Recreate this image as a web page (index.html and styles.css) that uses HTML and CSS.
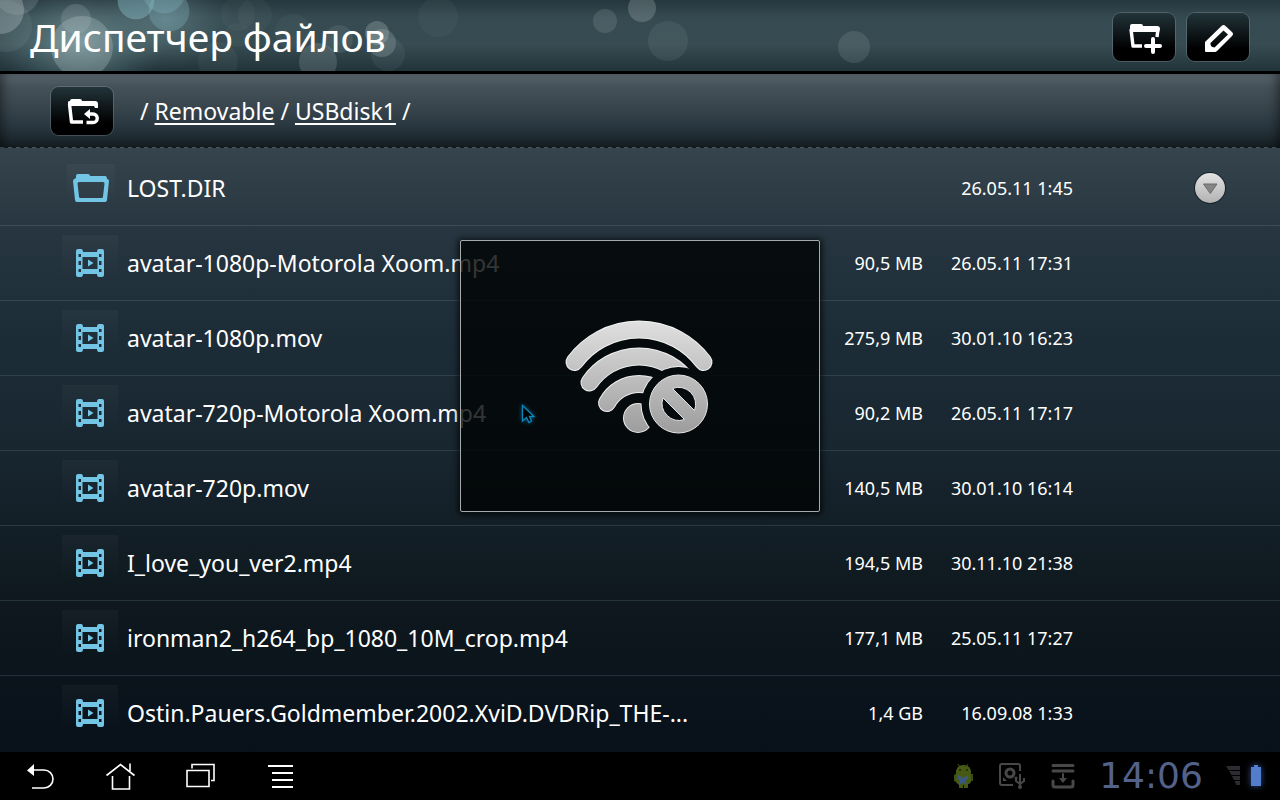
FILE: index.html
```html
<!DOCTYPE html>
<html lang="ru">
<head>
  <meta charset="UTF-8">
  <title>Диспетчер файлов</title>
  <link rel="stylesheet" href="styles.css">
</head>
<body>
  <header class="titlebar">
    <svg class="bokeh" width="900" height="71" viewBox="0 0 900 71" aria-hidden="true">
      <defs>
        <radialGradient id="glow"><stop offset="0" stop-color="#8fb4b8" stop-opacity=".6"/><stop offset="1" stop-color="#6e9498" stop-opacity="0"/></radialGradient>
      </defs>
      <ellipse cx="80" cy="42" rx="85" ry="58" fill="url(#glow)"/>
      <ellipse cx="165" cy="20" rx="70" ry="50" fill="url(#glow)" opacity=".6"/>
      <g fill="#b4c4c6">
        <circle cx="0" cy="10" r="24" opacity=".35"/>
        <circle cx="17" cy="-8" r="23" opacity=".2"/>
        <circle cx="6" cy="26" r="26" opacity=".1"/>
        <circle cx="82" cy="47" r="31" opacity=".3"/>
        <circle cx="76" cy="19" r="15" opacity=".2"/>
        <circle cx="238" cy="14" r="17" opacity=".05"/>
        <circle cx="237" cy="35" r="12" opacity=".05"/>
        <circle cx="255" cy="15" r="17" opacity=".05"/>
        <circle cx="218" cy="62" r="20" opacity=".06"/>
        <circle cx="293" cy="32" r="18" opacity=".05"/>
        <circle cx="318" cy="62" r="19" opacity=".2"/>
        <circle cx="339" cy="39" r="14" opacity=".12"/>
        <circle cx="377" cy="33" r="12" opacity=".28"/>
        <circle cx="382" cy="43" r="14" opacity=".24"/>
        <circle cx="388" cy="54" r="17" opacity=".08"/>
        <circle cx="438" cy="17" r="20" opacity=".05"/>
        <circle cx="605" cy="21" r="12" opacity=".16"/>
        <circle cx="642" cy="8" r="14" opacity=".26"/>
        <circle cx="668" cy="41" r="20" opacity=".1"/>
        <circle cx="854" cy="47" r="16" opacity=".15"/>
      </g>
      <g fill="#86b9c4" stroke="#b5d6dc" stroke-opacity=".4">
        <circle cx="136" cy="1" r="18" opacity=".45"/>
        <circle cx="164" cy="-8" r="21" opacity=".3"/>
        <circle cx="169" cy="11" r="20" opacity=".3"/>
      </g>
    </svg>
    <h1 class="title">Диспетчер файлов</h1>
    <button class="tool" type="button" aria-label="Новая папка">
      <svg width="62" height="48" viewBox="0 0 62 48">
        <path d="M17 16V13q0-2 2-2h9q2 0 2 2h14q3 0 3 3l-1 3H17z" fill="#fff"/>
        <path d="M18 16L20 33H29M45 16L44 24" fill="none" stroke="#fff" stroke-width="3.4" stroke-linejoin="round"/>
        <path d="M40 26V39M33 33H47" stroke="#fff" stroke-width="4" stroke-linecap="round"/>
      </svg>
    </button>
    <button class="tool" type="button" aria-label="Правка">
      <svg width="62" height="48" viewBox="0 0 62 48">
        <path fill-rule="evenodd" d="M18 29L34.500 13q2-2 4 0l6.500 6q2 2 0 4L30 38q-1 1-2 1H19q-1 0-1-1zM36.500 17.500L23.500 30Q23 34 27.500 34.500L41 21.500Z" fill="#fff"/>
      </svg>
    </button>
  </header>

  <nav class="pathbar" aria-label="Путь">
    <button class="tool" type="button" aria-label="Вверх">
      <svg width="62" height="48" viewBox="0 0 62 48">
        <path d="M17 18V15q0-1 2-1 0-2 2-2h8q2 0 2 2h13q3 0 3 3v4h-3l-1-2H18z" fill="#fff"/>
        <path d="M18.500 17L20.500 35H32" fill="none" stroke="#fff" stroke-width="3.400" stroke-linejoin="round"/>
        <path d="M33 27l6-5v10z" fill="#fff"/>
        <path d="M37 27H42a4 4 0 0 1 0 8.500H35.500" fill="none" stroke="#fff" stroke-width="3.400"/>
      </svg>
    </button>
    <p class="path">/ <a href="#removable">Removable</a> / <a href="#usbdisk1">USBdisk1</a> /</p>
  </nav>

  <main class="files">
    <svg class="sprite" width="0" height="0" aria-hidden="true">
      <symbol id="film" viewBox="0 0 28 28">
        <path fill-rule="evenodd" fill="#72c5e4" d="M2 0h3q2 0 2 3h14q0-3 2-3h3q2 0 2 2v24q0 2-2 2h-3q-2 0-2-3H7q0 3-2 3H2q-2 0-2-2V2q0-2 2-2zM6.500 8v12h15V8zM2.500 5v3H5V5zM2.500 12v4H5v-4zM2.500 20v3H5v-3zM23 5v3h2.500V5zM23 12v4h2.500v-4zM23 20v3h2.500v-3z"/>
        <path d="M12 10.500l5.500 3.500-5.500 3.500z" fill="#72c5e4"/>
      </symbol>
      <symbol id="folder" viewBox="0 0 36 28">
        <path fill-rule="evenodd" fill="#72c5e4" d="M3 4V2q0-2 2-2h10q2 0 2 2h15q2 0 2 3 2 0 2 2l-2 19q0 2-2 2H4q-2 0-2-2L0 7q0-2 3-3zM6 8q-1.500 0-1.500 1.500L6 22.500Q6 24 7.500 24h21q1.500 0 1.500-1.500L31.500 9.500Q31.500 8 30 8z"/>
      </symbol>
    </svg>
    <table class="list" aria-label="Файлы">
      <colgroup>
        <col class="col-icon"><col><col class="col-size"><col class="col-date"><col class="col-menu">
      </colgroup>
      <tbody>
        <tr>
          <td><span class="thumb thumb-dir"><svg width="36" height="28"><use href="#folder"/></svg></span></td>
          <td>LOST.DIR</td><td class="meta"></td><td class="meta">26.05.11 1:45</td>
          <td class="menu">
            <button class="more" type="button" aria-label="Меню">
              <svg width="32" height="32" viewBox="0 0 32 32">
                <defs><linearGradient id="knob" x2="0" y2="1"><stop offset="0" stop-color="#e2e2e2"/><stop offset="1" stop-color="#b2b2b2"/></linearGradient></defs>
                <circle cx="16" cy="16" r="16" fill="#17222a"/>
                <circle cx="16" cy="16" r="15" fill="url(#knob)"/>
                <path d="M9.500 12h13.500l-6.700 9.500z" fill="#858585" stroke="#6b6b6b" stroke-linejoin="round"/>
              </svg>
            </button>
          </td>
        </tr>
        <tr>
          <td><span class="thumb"><svg width="28" height="28"><use href="#film"/></svg></span></td>
          <td>avatar-1080p-Motorola Xoom.mp4</td><td class="meta">90,5 MB</td><td class="meta">26.05.11 17:31</td><td></td>
        </tr>
        <tr>
          <td><span class="thumb"><svg width="28" height="28"><use href="#film"/></svg></span></td>
          <td>avatar-1080p.mov</td><td class="meta">275,9 MB</td><td class="meta">30.01.10 16:23</td><td></td>
        </tr>
        <tr>
          <td><span class="thumb"><svg width="28" height="28"><use href="#film"/></svg></span></td>
          <td>avatar-720p-Motorola Xoom.mp4</td><td class="meta">90,2 MB</td><td class="meta">26.05.11 17:17</td><td></td>
        </tr>
        <tr>
          <td><span class="thumb"><svg width="28" height="28"><use href="#film"/></svg></span></td>
          <td>avatar-720p.mov</td><td class="meta">140,5 MB</td><td class="meta">30.01.10 16:14</td><td></td>
        </tr>
        <tr>
          <td><span class="thumb"><svg width="28" height="28"><use href="#film"/></svg></span></td>
          <td>I_love_you_ver2.mp4</td><td class="meta">194,5 MB</td><td class="meta">30.11.10 21:38</td><td></td>
        </tr>
        <tr>
          <td><span class="thumb"><svg width="28" height="28"><use href="#film"/></svg></span></td>
          <td>ironman2_h264_bp_1080_10M_crop.mp4</td><td class="meta">177,1 MB</td><td class="meta">25.05.11 17:27</td><td></td>
        </tr>
        <tr>
          <td><span class="thumb"><svg width="28" height="28"><use href="#film"/></svg></span></td>
          <td>Ostin.Pauers.Goldmember.2002.XviD.DVDRip_THE-...</td><td class="meta">1,4 GB</td><td class="meta">16.09.08 1:33</td><td></td>
        </tr>
      </tbody>
    </table>
  </main>

  <footer class="sysbar">
    <button class="nav" type="button" aria-label="Назад">
      <svg width="32" height="32" viewBox="0 0 32 32" fill="none" stroke="#fff" stroke-width="1.600">
        <path d="M3 10.500L10 4v12z" fill="#fff" stroke="none"/>
        <path d="M10 10H20a9 9 0 0 1 0 18H8"/>
      </svg>
    </button>
    <button class="nav" type="button" aria-label="Домой">
      <svg width="32" height="32" viewBox="0 0 32 32" fill="none" stroke="#fff" stroke-width="1.600">
        <path d="M2.500 15.500L16.500 4.500 30.500 15.500M26 3.500V11M8.500 16V29H25.500V16"/>
      </svg>
    </button>
    <button class="nav" type="button" aria-label="Недавние">
      <svg width="32" height="32" viewBox="0 0 32 32" fill="none" stroke="#fff" stroke-width="1.600">
        <path d="M3 10.500H25V26.500H3zM8 8.500V4.500H30V20.500H27"/>
      </svg>
    </button>
    <button class="nav" type="button" aria-label="Меню">
      <svg width="32" height="32" viewBox="0 0 32 32" stroke="#fff" stroke-width="2">
        <path d="M4 6H29M8 13H29M8 20H29M8 27H29"/>
      </svg>
    </button>
    <div class="tray">
      <svg width="20" height="28" viewBox="0 0 20 28" aria-hidden="true">
        <path d="M4 2l2 3M14 2l-2 3" stroke="#465a12"/>
        <path d="M16 12h3v7h-3z" fill="#3c4a14"/>
        <path d="M2 11q0-8 7.500-8T17 11v8q0 3-3 3v4h-4v-3H9v3H5v-4q-3 0-3-3z" fill="#465a14"/>
        <path d="M0 13v6l2 1v-8z" fill="#3e5012"/>
        <circle cx="6" cy="8" r="1" fill="#1c2406"/><circle cx="13" cy="8" r="1" fill="#1c2406"/>
        <path d="M4 13l5 3 5-3v4l-3 2 3 4-5-2-5 2 2-4-2-2z" fill="#3b5882"/>
      </svg>
      <svg width="28" height="28" viewBox="0 0 28 28" fill="none" stroke="#484848" stroke-width="2" aria-hidden="true">
        <path d="M22 9V4q0-2-2-2H4Q2 2 2 4v17q0 2 2 2h11"/>
        <circle cx="12" cy="11" r="4" stroke-width="3"/>
        <path d="M5 19v-4l4 4z" fill="#484848" stroke="none"/>
        <path d="M22 12v13M18 16v3l4 3 4-3v-3"/>
        <circle cx="22" cy="25" r="1"/><circle cx="18" cy="16" r=".6"/>
      </svg>
      <svg width="26" height="28" viewBox="0 0 26 28" fill="none" stroke="#484848" stroke-width="3" stroke-linecap="round" aria-hidden="true">
        <path d="M3 3.500H23M3 9H23M3 19v4q0 2 2 2H21q2 0 2-2V19"/>
        <path d="M13 12v5" stroke-width="2"/><path d="M9 16h8l-4 5z" fill="#484848" stroke="none"/>
      </svg>
      <time class="clock">14:06</time>
      <svg width="14" height="20" viewBox="0 0 14 20" fill="#2c2b31" aria-hidden="true">
        <path d="M0 0h14v4H2.500zM3 5h11v4H5.500zM6 10h8v4H8zM8.500 15H14v4h-3.500z"/>
      </svg>
      <svg class="battery" width="12" height="22" viewBox="0 0 12 22" fill="#537dcb" aria-hidden="true">
        <path d="M4 0h4v2h3v19H1V2h3z"/>
      </svg>
    </div>
  </footer>

  <div class="overlay">
    <div class="toast" role="status" aria-label="Wi-Fi">
      <svg width="180" height="150" viewBox="0 0 180 150">
        <defs>
          <linearGradient id="metal" gradientUnits="userSpaceOnUse" x1="0" y1="20" x2="0" y2="133"><stop offset="0" stop-color="#e0e0e0"/><stop offset="1" stop-color="#9c9c9c"/></linearGradient>
          <mask id="cutEdge" maskUnits="userSpaceOnUse" x="0" y="0" width="180" height="150"><path d="M0 0h180v150H0z" fill="#fff"/><circle cx="128.500" cy="103" r="37" fill="#000"/></mask>
          <mask id="cutBody" maskUnits="userSpaceOnUse" x="0" y="0" width="180" height="150"><path d="M0 0h180v150H0z" fill="#fff"/><circle cx="128.500" cy="103" r="38" fill="#000"/></mask>
          <path id="arc1" d="M24.500 61A80.200 80.200 0 0 1 153.500 61"/>
          <path id="arc2" d="M39.500 81.500A60 60 0 0 1 138.500 81.500"/>
          <path id="arc3" d="M57 102A36.400 36.400 0 0 1 121 102"/>
        </defs>
        <g fill="none" stroke-linecap="round">
          <use href="#arc1" stroke="#f4f4f4" stroke-width="18"/>
          <use href="#arc1" stroke="url(#metal)" stroke-width="16"/>
          <g mask="url(#cutEdge)" stroke="#eee" stroke-width="18">
            <use href="#arc2"/><use href="#arc3"/><circle cx="88" cy="117" r="15" fill="#eee" stroke="none"/>
          </g>
          <g mask="url(#cutBody)" stroke="url(#metal)" stroke-width="16">
            <use href="#arc2"/><use href="#arc3"/><circle cx="88" cy="117" r="14" fill="url(#metal)" stroke="none"/>
          </g>
        </g>
        <path fill="url(#metal)" stroke="#e4e4e4" fill-rule="evenodd" d="M99.500 103a29 29 0 1 1 58 0a29 29 0 1 1-58 0zM122.500 87.500L144.500 109.500A17 17 0 0 0 122.500 87.500zM113 97L134.500 118.500A17 17 0 0 1 113 97z"/>
      </svg>
    </div>
  </div>

  <svg class="cursor" width="16" height="22" viewBox="0 0 16 22" aria-hidden="true">
    <path d="M1.500 1.500V17L5.500 13.500 8 18.500 10.500 17 8.500 12.500H13z" fill="#000" stroke="#0d86b8" stroke-width="1.300"/>
  </svg>
</body>
</html>
```
FILE: styles.css
```css
* {
  box-sizing: border-box;
}
body {
  margin: 0;
  height: 100vh;
  display: flex;
  flex-direction: column;
  position: relative;
  overflow: hidden;
  background: #000;
  color: #fff;
  font-family: "Noto Sans", "Open Sans", sans-serif;
  font-size: 23px;
}
button {
  padding: 0;
  border: none;
  background: none;
  cursor: pointer;
}
svg {
  display: block;
}

/* title bar */
.titlebar {
  position: relative;
  display: flex;
  align-items: center;
  gap: 12px;
  height: 74px;
  padding: 2px 31px 0 30px;
  border-bottom: 3px solid #000;
  background: linear-gradient(#26373e, #354a51 18px, #374c52 44px, #21343a);
  overflow: hidden;
}
.bokeh {
  position: absolute;
  top: 0;
  left: 0;
}
.title {
  position: relative;
  flex: 1;
  margin: 0;
  font-size: 39px;
  font-weight: 400;
  line-height: 48px;
}
.tool {
  flex: none;
  width: 62px;
  height: 48px;
  border-radius: 8px;
  background: linear-gradient(#22343a, #000 75%);
  box-shadow: 0 0 0 1px rgba(190, 205, 210, 0.22);
}

/* current path */
.pathbar {
  display: flex;
  align-items: center;
  gap: 27px;
  height: 74px;
  padding: 0 51px;
  background:
    repeating-linear-gradient(90deg, #55626a 0 4px, transparent 4px 8px) bottom / 100% 1px no-repeat,
    linear-gradient(#5b676e, #45525a 12px, #36434b 36px, #293740 52px, #141d22);
  box-shadow: inset 8px 0 12px -6px rgba(0, 0, 0, 0.5), inset -8px 0 12px -6px rgba(0, 0, 0, 0.5);
}
.path {
  margin: 0;
}
.path a {
  color: inherit;
  text-decoration: underline;
  text-decoration-thickness: 2px;
  text-underline-offset: 3px;
}

/* file list */
.files {
  flex: 1;
  min-height: 0;
  padding-top: 3px;
  overflow: hidden;
  background: linear-gradient(#36444d, #26353f 14%, #1d2d37 30%, #182630 50%, #0e181e 75%, #08111a);
}
.sprite {
  position: absolute;
}
.list {
  width: 100%;
  table-layout: fixed;
  border-collapse: separate;
  border-spacing: 0;
}
.col-icon {
  width: 127px;
}
.col-size {
  width: 120px;
}
.col-date {
  width: 150px;
}
.col-menu {
  width: 207px;
}
.list td {
  height: 75px;
  padding: 0;
  border-bottom: 1px solid rgba(160, 190, 205, 0.16);
  white-space: nowrap;
}
.list tr:last-child td {
  border-bottom-color: transparent;
}
.list .meta {
  font-size: 18px;
  text-align: right;
}
.thumb {
  display: flex;
  align-items: center;
  justify-content: center;
  width: 56px;
  height: 56px;
  margin-left: 62px;
  background: linear-gradient(rgba(255, 255, 255, 0.03), transparent 80%);
}
.thumb-dir {
  width: 48px;
  height: 48px;
  margin-left: 67px;
}
.list .menu {
  padding-right: 54px;
}
.more {
  display: block;
  margin-left: auto;
}

/* system bar */
.sysbar {
  display: flex;
  align-items: center;
  height: 48px;
  padding-right: 18px;
  background: #000;
}
.nav {
  display: flex;
  justify-content: center;
  width: 80px;
}
.tray {
  display: flex;
  align-items: center;
  gap: 24px;
  margin-left: auto;
}
.clock {
  width: 118px;
  margin: 0 -8px;
  color: #53628a;
  font-family: "DejaVu Sans", sans-serif;
  font-size: 36px;
  line-height: 48px;
  text-align: center;
}
.battery {
  margin-left: -14px;
  filter: drop-shadow(0 0 3px #2f4f94);
}

/* wi-fi state popup */
.overlay {
  position: absolute;
  inset: 0 0 48px;
  display: flex;
  align-items: center;
  justify-content: center;
  pointer-events: none;
}
.toast {
  display: flex;
  align-items: center;
  justify-content: center;
  width: 360px;
  height: 272px;
  border: 1px solid #a5a9ab;
  border-radius: 2px;
  background: rgba(0, 2, 3, 0.8);
  box-shadow: 0 1px 6px 2px rgba(0, 0, 0, 0.7);
}
.cursor {
  position: absolute;
  top: 404px;
  left: 521px;
  filter: drop-shadow(0 0 2px #0a5f86);
}
```
